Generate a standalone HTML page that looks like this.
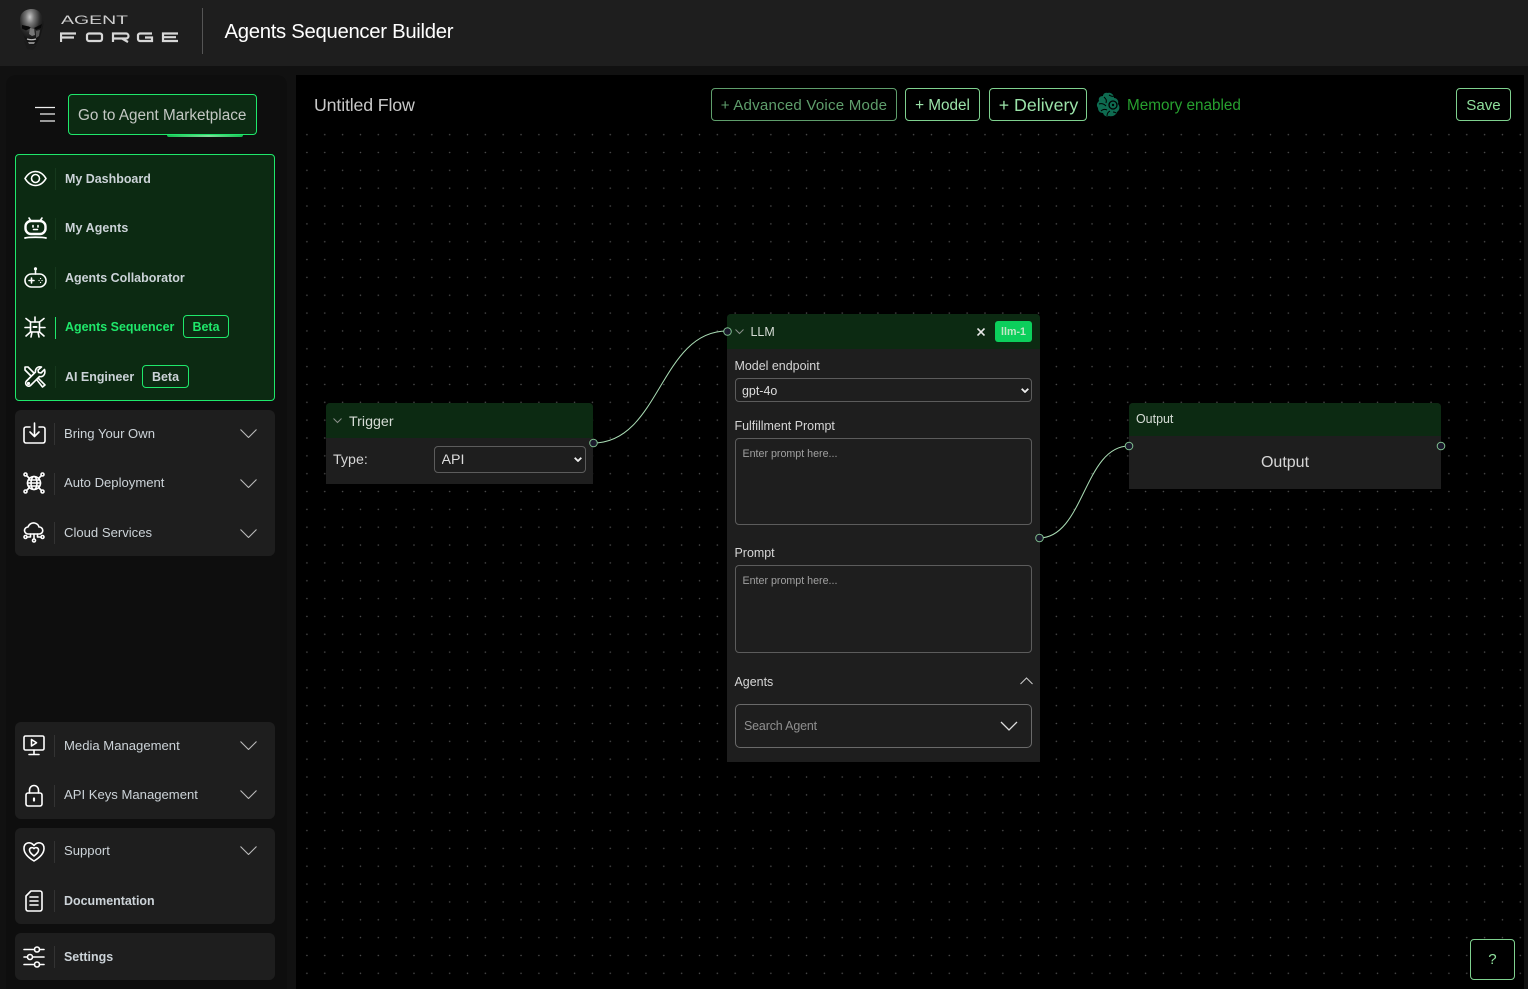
<!DOCTYPE html>
<html><head><meta charset="utf-8"><title>Agents Sequencer Builder</title>
<style>
*{box-sizing:border-box}
html,body{margin:0;padding:0;width:1528px;height:989px;overflow:hidden;background:#111;font-family:"Liberation Sans",sans-serif;color:#ddd}
.a{position:absolute}
.t{position:absolute;white-space:nowrap;line-height:1}
.hdr{left:0;top:0;width:1528px;height:66px;background:#1e1e1e}
.side{left:6px;top:75px;width:281px;height:914px;background:#0e0e0e;border-radius:10px 10px 0 0}
.canvas{left:296px;top:75px;width:1228px;height:914px;background-color:#000;background-image:radial-gradient(circle at center,#5a5a5a 0,#4a4a4a .55px,transparent .95px);background-size:17.85px 17.85px;background-position:2px -2.8px}
.grp{position:absolute;left:15px;width:260px;background:#1e1e1e;border-radius:6px}
.lab{font-size:12.46px;color:#ccd3d8}
.n{font-size:13.1px;margin-top:-.3px}
.b{font-weight:700}
.sep{position:absolute;left:54px;width:1px;height:22px;background:#333}
.sepg{position:absolute;left:55px;width:1px;height:22px;background:#16391d}
.btn{position:absolute;border:1px solid #7fd18f;border-radius:4px;background:#000;color:#8fe09c;white-space:nowrap;text-align:center}
.beta{position:absolute;height:23px;border:1px solid #1fe86b;border-radius:4px;font-size:12.46px;font-weight:700;text-align:center;line-height:23px}
svg.i{position:absolute;fill:none;stroke:#fff;stroke-width:1.6;stroke-linecap:round;stroke-linejoin:round;overflow:visible}
.chev{position:absolute;left:239.5px;width:17px;height:9px}
.node{position:absolute;background:#1e1e1e}
.nh{position:absolute;left:0;top:0;width:100%;background:#0c2a12;border-radius:4px 4px 0 0}
select{position:absolute;appearance:none;-webkit-appearance:none;background:#1e1e1e;color:#ddd;border:1px solid #5c5c5c;border-radius:4px;font-family:"Liberation Sans",sans-serif;outline:none;padding:1px 0 0 6.5px}
textarea{position:absolute;background:#1e1e1e;border:1px solid #5c5c5c;border-radius:4px;resize:none;outline:none;font-family:"Liberation Sans",sans-serif;font-size:10.68px;padding:9px 7px 7px;color:#ddd}
textarea::placeholder{color:#a0a0a0;opacity:1}
</style></head><body>

<div class="a hdr"></div>
<!-- logo -->
<svg class="a" style="left:15px;top:6px" width="34" height="46" viewBox="0 0 34 46">
<defs>
<radialGradient id="hd" cx="42%" cy="22%" r="62%"><stop offset="0" stop-color="#c8c8c8"/><stop offset=".3" stop-color="#777"/><stop offset=".7" stop-color="#2b2b2b"/><stop offset="1" stop-color="#141414"/></radialGradient>
</defs>
<path d="M5 14C5 6 11 3 17 3c6 0 10 4 11 11 1 4 0 7-1 10-1 5-3 10-5 13-2 3-6 3-8 1-3-3-5-6-6-10-2-1-3-4-3-7z" fill="url(#hd)"/>
<path d="M7 19l7 1.500 2 1.500-5 2.500-4-2zM19 22l8-4-1 4-5 2z" fill="#080808"/>
<path d="M15 22l-1 6 3 2 3-1-1-6z" fill="#777"/>
<path d="M21 25l4-1-1 6-3 2z" fill="#555"/>
<path d="M12 33c3 1 6 1 9 0" stroke="#bbb" stroke-width="1.200" fill="none"/>
<path d="M13 36l7 0-1 2-5 0z" fill="#888"/>
<path d="M9 35l3 8 6 1 4-5-4 2z" fill="#1a1a1a"/>
</svg>
<svg class="a" style="left:60px;top:12px" width="122" height="34">
<text x="1" y="12" font-family="Liberation Sans" font-size="11.5" fill="#cfcfcf" textLength="67" lengthAdjust="spacingAndGlyphs">AGENT</text>
<g fill="none" stroke="#d8d8d8" stroke-width="2.2">
<path d="M1 30V21.5H16M1 25.5H14"/>
<rect x="27" y="21.5" width="15" height="7.5" rx="2"/>
<path d="M53 30V21.5H66a2 2 0 0 1 0 5H54M62 26.5L68 30"/>
<path d="M92 21.5H80a2 2 0 0 0-2 2V27a2 2 0 0 0 2 2H92V25.5H85"/>
<path d="M118 21.5H103V29H118M103 25.2H116"/>
</g></svg>
<div class="a" style="left:202px;top:8px;width:1px;height:46px;background:#555"></div>
<div class="t" style="left:224.5px;top:21.5px;font-size:20.3px;letter-spacing:-.29px;color:#fff">Agents Sequencer Builder</div>

<div class="a side"></div>
<div class="a canvas"></div>
<div class="a" style="left:296px;top:75px;width:1228px;height:56px;background:#000"></div>

<!-- menu + marketplace -->
<svg class="a" style="left:34px;top:106px" width="22" height="17" fill="none" stroke="#eee" stroke-width="1.2"><path d="M1 1.5H21M6 8H21M6 15H21"/></svg>
<div class="a" style="left:68px;top:94px;width:189px;height:41px;background:#0c2a12;border:1px solid #1fe86b;border-radius:4px"></div>
<div class="a" style="left:167px;top:134.5px;width:76px;height:2px;background:linear-gradient(90deg,#12c050,#7fe09a 55%,#12c050);border-radius:0 0 3px 3px"></div>
<div class="t" style="left:78px;top:108px;font-size:15.3px;color:#c4c8c4">Go to Agent Marketplace</div>

<!-- green group -->
<div class="a" style="left:15px;top:154px;width:260px;height:247px;background:#0c2a12;border:1px solid #1fe86b;border-radius:4px"></div>
<div class="sepg" style="top:168px"></div><div class="sepg" style="top:218px"></div><div class="sepg" style="top:267px"></div>
<div class="a" style="left:55px;top:317px;width:1px;height:22px;background:#1fe86b"></div><div class="sepg" style="top:366px"></div>

<svg class="i" style="left:24px;top:167px" width="23" height="23" viewBox="0 0 23 23" stroke-width="1.8"><path d="M1 11.5C4 6.5 7.500 4.500 11.500 4.500S19 6.500 22 11.500C19 16.500 15.500 18.500 11.500 18.500S4 16.500 1 11.500z"/><circle cx="11.500" cy="11.500" r="4"/></svg>
<svg class="i" style="left:24px;top:217px" width="23" height="23" viewBox="0 0 23 23"><path d="M5 1l2 3M18 1l-2 3"/><rect x="1.500" y="4" width="20" height="13" rx="5.500" stroke-width="2.4"/><path d="M9 8.500v1.500M14 8.500v1.500M9.500 12.500h4"/><path d="M1 21c3-1 18-1 21 0" stroke-width="1.800"/></svg>
<svg class="i" style="left:24px;top:267px" width="23" height="22" viewBox="0 0 23 22"><path d="M11.500 1v6"/><circle cx="11.500" cy="1.800" r=".8"/><rect x="1" y="7" width="21" height="13" rx="6.500"/><path d="M5 13.500h5M7.500 11v5"/><path d="M15 13.500h.1M18 13.500h.1M16.500 11.500h.1M16.500 15.500h.1" stroke-width="1.200"/></svg>
<svg class="i" style="left:24px;top:316px" width="22" height="22" viewBox="0 0 22 22" stroke-width="1.900"><rect x="6.500" y="6" width="9" height="10"/><path d="M9.500 11h3" stroke-width="2"/><path d="M11 1v5M2 2.500L6.500 6M20 2.500L15.500 6M1 11.500h5.500M21 11.500h-5.500M2 20l4.500-4M20 20l-4.500-4M7 21l1-5M15 21l-1-5"/></svg>
<svg class="i" style="left:24px;top:366px" width="22" height="22" viewBox="0 0 22 22" stroke-width="1.700"><path d="M20.500 3.500L17 7l-2.500-.5L14 4l3.500-3C14 0 11 2.500 11.500 6L2.500 15C0 17.500 3.500 22 6.500 19.500l9-9C19 11.500 22 8 20.500 3.500z"/><path d="M1 1h3l5.500 5.500M1 1v3l5.500 5.500"/><path d="M13 14l5.500 7 2.500-2-6.500-6.500"/><circle cx="4.500" cy="17.500" r=".8"/></svg>

<div class="t lab b" style="left:65px;top:172.5px">My Dashboard</div>
<div class="t lab b" style="left:65px;top:221.5px;letter-spacing:.1px">My Agents</div>
<div class="t lab b" style="left:65px;top:271.5px">Agents Collaborator</div>
<div class="t lab b" style="left:65px;top:320.5px;color:#1fe86b">Agents Sequencer</div>
<div class="beta" style="left:183px;top:315px;width:46px;color:#1fe86b">Beta</div>
<div class="t lab b" style="left:65px;top:370.5px">AI Engineer</div>
<div class="beta" style="left:142px;top:365px;width:47px;color:#ccd3d8">Beta</div>

<!-- group 2 -->
<div class="grp" style="top:410px;height:146px"></div>
<div class="sep" style="top:423px"></div><div class="sep" style="top:473px"></div><div class="sep" style="top:522px"></div>
<svg class="i" style="left:23px;top:422px" width="23" height="22" viewBox="0 0 23 22" stroke-width="1.800"><path d="M7 5H3a2 2 0 0 0-2 2v12a2 2 0 0 0 2 2h17a2 2 0 0 0 2-2V7a2 2 0 0 0-2-2h-4"/><path d="M11.500 1v13M7 10l4.500 4.500L16 10"/></svg>
<svg class="i" style="left:23px;top:472px" width="22" height="22" viewBox="0 0 22 22" stroke-width="1.200"><circle cx="11" cy="11" r="6.500"/><ellipse cx="11" cy="11" rx="3" ry="6.500"/><path d="M4.500 11h13M5.500 8h11M5.500 14h11"/><circle cx="2.500" cy="2.500" r="1.500"/><circle cx="19.500" cy="2.500" r="1.500"/><circle cx="2.500" cy="19.500" r="1.500"/><circle cx="19.500" cy="19.500" r="1.500"/><path d="M3.500 3.500l3 3M18.500 3.500l-3 3M3.500 18.500l3-3M18.500 18.500l-3-3"/></svg>
<svg class="i" style="left:23px;top:522px" width="22" height="21" viewBox="0 0 22 21" stroke-width="1"><path d="M6 12H5a3.500 3.500 0 0 1 0-7c1-3 4-4.500 6.500-4s4 2 4.500 4a3.500 3.500 0 0 1 .5 7H6z"/><path d="M11 12v5M7.500 12v3H4M14.500 12v3H18"/><circle cx="2.500" cy="15" r="1.500"/><circle cx="19.500" cy="15" r="1.500"/><circle cx="11" cy="18.500" r="1.500"/></svg>
<div class="t lab n" style="left:64px;top:427.5px">Bring Your Own</div>
<div class="t lab n" style="left:64px;top:476.5px">Auto Deployment</div>
<div class="t lab n" style="left:64px;top:526.5px">Cloud Services</div>
<svg class="chev" style="top:429px" viewBox="0 0 17 9" fill="none" stroke="#bbb" stroke-width="1.100"><path d="M.5.500l8 8 8-8"/></svg>
<svg class="chev" style="top:479px" viewBox="0 0 17 9" fill="none" stroke="#bbb" stroke-width="1.100"><path d="M.5.500l8 8 8-8"/></svg>
<svg class="chev" style="top:529px" viewBox="0 0 17 9" fill="none" stroke="#bbb" stroke-width="1.100"><path d="M.5.500l8 8 8-8"/></svg>

<!-- group 3 -->
<div class="grp" style="top:722px;height:97px"></div>
<div class="sep" style="top:735px"></div><div class="sep" style="top:785px"></div>
<svg class="i" style="left:23px;top:735px" width="22" height="21" viewBox="0 0 22 21" stroke-width="1.500"><rect x="1" y="1" width="20" height="14" rx="1.500"/><path d="M8.500 4.500v6.500l5-3.250z"/><path d="M11 15v4M6 19.500h10"/></svg>
<svg class="i" style="left:25px;top:785px" width="18" height="22" viewBox="0 0 18 22" stroke-width="1.900"><rect x="1" y="8" width="16" height="13" rx="2"/><path d="M4.500 8V5a4.500 4.500 0 0 1 9 0v3"/><path d="M9 13.500v2" stroke-width="2.200"/></svg>
<div class="t lab n" style="left:64px;top:739.5px">Media Management</div>
<div class="t lab n" style="left:64px;top:788.5px">API Keys Management</div>
<svg class="chev" style="top:741px" viewBox="0 0 17 9" fill="none" stroke="#bbb" stroke-width="1.100"><path d="M.5.500l8 8 8-8"/></svg>
<svg class="chev" style="top:790px" viewBox="0 0 17 9" fill="none" stroke="#bbb" stroke-width="1.100"><path d="M.5.500l8 8 8-8"/></svg>

<!-- group 4 -->
<div class="grp" style="top:828px;height:96px"></div>
<div class="sep" style="top:841px"></div><div class="sep" style="top:890px"></div>
<svg class="i" style="left:23px;top:842px" width="22" height="20" viewBox="0 0 22 20" stroke-width="1.500"><path d="M11 3.500C9 1 6.500.5 4.500 1 2 1.800 1 4 1 6.500c0 5 5 9.500 10 12.500 5-3 10-7.500 10-12.500 0-2.500-1-4.700-3.500-5.500-2-.5-4.500 0-6.500 2.500z"/><path d="M11 6.500C9.500 5 7 5.500 6.500 7.500c-.4 2 1.800 4.500 4.500 6.500 2.700-2 4.900-4.500 4.500-6.500-.5-2-3-2.500-4.500-1z"/></svg>
<svg class="i" style="left:25px;top:890px" width="18" height="22" viewBox="0 0 18 22" stroke-width="1.600"><path d="M6 1h9a2 2 0 0 1 2 2v16a2 2 0 0 1-2 2H3a2 2 0 0 1-2-2V6z"/><path d="M5 7h8M5 11h8M5 15h8"/></svg>
<div class="t lab n" style="left:64px;top:844.5px">Support</div>
<div class="t lab b" style="left:64px;top:894.5px">Documentation</div>
<svg class="chev" style="top:846px" viewBox="0 0 17 9" fill="none" stroke="#bbb" stroke-width="1.100"><path d="M.5.500l8 8 8-8"/></svg>

<!-- group 5 -->
<div class="grp" style="top:933px;height:47px"></div>
<div class="sep" style="top:946px"></div>
<svg class="i" style="left:24px;top:946px" width="21" height="22" viewBox="0 0 21 22" stroke-width="1.400"><path d="M0 3.500H10M16 3.500H20M0 11H3M9 11H20M0 18.500H10M16 18.500H20"/><circle cx="13" cy="3.500" r="2.500"/><circle cx="6" cy="11" r="2.500"/><circle cx="13" cy="18.500" r="2.500"/></svg>
<div class="t lab b" style="left:64px;top:950.5px">Settings</div>

<!-- toolbar -->
<div class="t" style="left:314px;top:97px;font-size:17.8px;letter-spacing:-.16px;color:#c8c8c8">Untitled Flow</div>
<div class="btn" style="left:711px;top:88px;width:186px;height:33px;font-size:15.1px;letter-spacing:.2px;line-height:33px;color:#5f9e6c;border-color:#5f9e6c">+ Advanced Voice Mode</div>
<div class="btn" style="left:905px;top:88px;width:75px;height:33px;font-size:15.3px;line-height:33px;color:#9be3a9;border-color:#7fd18f">+ Model</div>
<div class="btn" style="left:989px;top:88px;width:98px;height:33px;font-size:17.8px;line-height:33px;padding-left:1px;color:#9be3a9;border-color:#7fd18f">+ Delivery</div>
<svg class="a" style="left:1096px;top:91px" width="25" height="28" viewBox="0 0 25 28"><path d="M12 2c-3-1-5 1-5 3-3 0-5 2-4 5-2 2-3 4-1 7 0 3 2 5 5 5 1 3 3 4 6 3 4 1 7-1 8-4 3-2 3-6 1-8 1-3-1-6-4-6 0-3-3-6-6-5z" fill="#0e6b50"/><circle cx="17" cy="14" r="4" fill="none" stroke="#000" stroke-width="1.300"/><circle cx="17" cy="14" r="1.200" fill="#000"/><path d="M8 6c2 2 3 3 2 6M3 13c3-1 5 0 7 2M5 20c2-2 4-2 6-1M11 25c0-2 1-4 3-5M13 4c2 1 3 2 5 1M20 22c-1-1-2-1-3-1" fill="none" stroke="#000" stroke-width="1"/></svg>
<div class="t" style="left:1127px;top:98px;font-size:15.3px;color:#27a02f">Memory enabled</div>
<div class="btn" style="left:1456px;top:88px;width:55px;height:33px;font-size:15.1px;line-height:33px;color:#8fe09c">Save</div>
<div class="btn" style="left:1470px;top:939px;width:45px;height:41px;font-size:15.1px;line-height:40px;color:#8fe09c">?</div>

<!-- edges -->
<svg class="a" style="left:0;top:0;pointer-events:none" width="1528" height="989" fill="none" stroke="#a9dcb4" stroke-width="1"><path d="M593 443C660 443 660 331 727 331"/><path d="M1039 538C1084 538 1084 446 1129 446"/></svg>

<!-- trigger -->
<div class="node" style="left:326px;top:403px;width:267px;height:81px;border-radius:4px 4px 0 0">
<div class="nh" style="height:35px"></div>
<svg class="a" style="left:7px;top:15px" width="9" height="6" fill="none" stroke="#8a8f8a" stroke-width="1"><path d="M.5.500l4 4 4-4"/></svg>
<div class="t" style="left:23px;top:12px;font-size:14.24px;color:#d6dcd6">Trigger</div>
<div class="t" style="left:7px;top:50px;font-size:14.24px;color:#d6d6d6">Type:</div>
<select style="left:108px;top:43px;width:152px;height:27px;font-size:14.24px"><option>API</option></select>
<svg class="a" style="left:248px;top:54px" width="8" height="5" fill="none" stroke="#eee" stroke-width="1.800"><path d="M.7.700l3.300 3.300 3.300-3.300"/></svg>
</div>

<!-- llm -->
<div class="node" style="left:727px;top:314px;width:313px;height:448px;border-radius:4px 4px 0 0">
<div class="nh" style="height:35px"></div>
<svg class="a" style="left:8px;top:15px" width="9" height="6" fill="none" stroke="#8a8f8a" stroke-width="1"><path d="M.5.500l4 4 4-4"/></svg>
<div class="t" style="left:23.5px;top:12px;font-size:12.46px;color:#d6dcd6">LLM</div>
<svg class="a" style="left:250px;top:13.5px" width="8" height="8" fill="none" stroke="#e8e8e8" stroke-width="1.600"><path d="M.5.500l7 7M7.500.500l-7 7"/></svg>
<div class="a" style="left:268px;top:7px;width:37px;height:21px;background:#0ccf5c;border-radius:3px;color:#bfe7c5;font-size:10.68px;font-weight:700;text-align:center;line-height:23px">llm-1</div>
<div class="t" style="left:7.5px;top:46px;font-size:12.46px;color:#d6d6d6">Model endpoint</div>
<select style="left:7.5px;top:64px;width:297.5px;height:24px;font-size:12.46px;padding-top:2px"><option>gpt-4o</option></select>
<svg class="a" style="left:293.5px;top:74px" width="8" height="5" fill="none" stroke="#eee" stroke-width="1.800"><path d="M.7.700l3.300 3.300 3.300-3.300"/></svg>
<div class="t" style="left:7.5px;top:106px;font-size:12.46px;color:#d6d6d6">Fulfillment Prompt</div>
<textarea style="left:7.5px;top:124px;width:297.5px;height:87px" placeholder="Enter prompt here..."></textarea>
<div class="t" style="left:7.5px;top:233px;font-size:12.46px;color:#d6d6d6">Prompt</div>
<textarea style="left:7.5px;top:251px;width:297.5px;height:88px" placeholder="Enter prompt here..."></textarea>
<div class="t" style="left:7.5px;top:362px;font-size:12.46px;color:#d6d6d6">Agents</div>
<svg class="a" style="left:293px;top:363px" width="13" height="8" fill="none" stroke="#ccc" stroke-width="1"><path d="M.5 7l6-6 6 6"/></svg>
<div class="a" style="left:7.5px;top:390px;width:297.5px;height:43.5px;border:1px solid #6a6a6a;border-radius:5px"></div>
<div class="t" style="left:17px;top:406px;font-size:12.46px;letter-spacing:-.15px;color:#8f8f8f">Search Agent</div>
<svg class="a" style="left:273px;top:407px" width="18" height="10" fill="none" stroke="#ddd" stroke-width="1.300"><path d="M1 1l8 8 8-8"/></svg>
</div>

<!-- output -->
<div class="node" style="left:1129px;top:403px;width:312px;height:86px;border-radius:4px 4px 0 0">
<div class="nh" style="height:33px"></div>
<div class="t" style="left:7px;top:10px;font-size:12.46px;color:#d6dcd6">Output</div>
<div class="t" style="left:0;width:312px;text-align:center;top:51.5px;font-size:16px;color:#d6d6d6">Output</div>
</div>

<!-- handles -->
<svg class="a" style="left:0;top:0;pointer-events:none" width="1528" height="989" fill="#1a192b" stroke="#7fbf8f" stroke-width="1">
<circle cx="593.5" cy="443" r="3.800"/><circle cx="727.5" cy="331.5" r="3.800"/><circle cx="1039.5" cy="538" r="3.800"/><circle cx="1129" cy="446" r="3.800"/><circle cx="1441" cy="446" r="3.800"/>
</svg>
</body></html>
